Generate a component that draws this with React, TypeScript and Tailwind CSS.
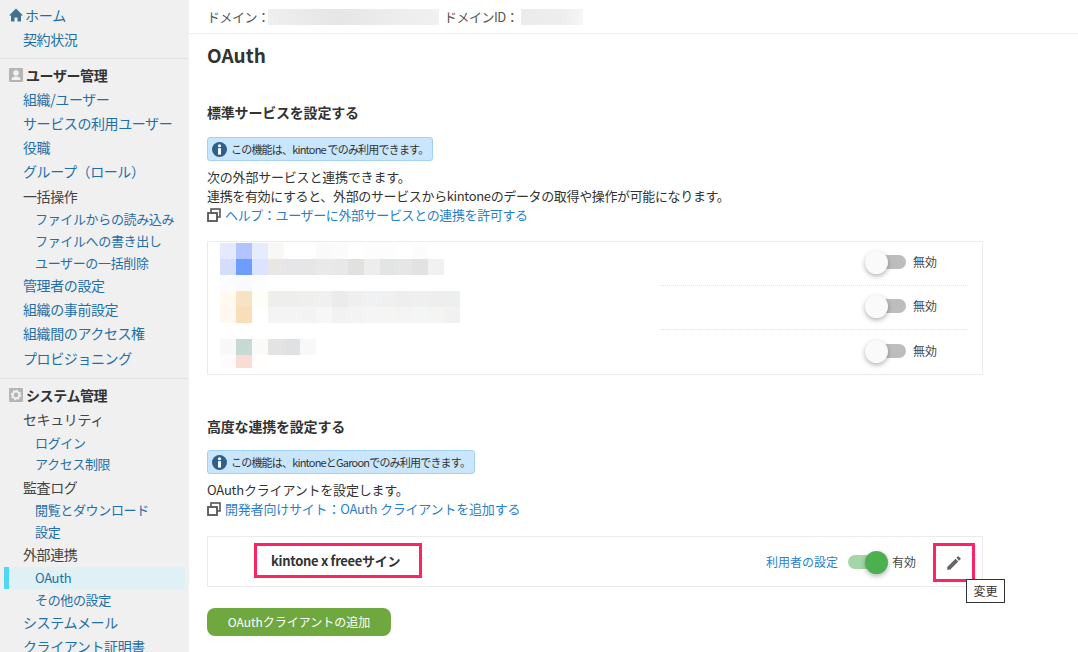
import React from "react";

const C = ({ c }: { c: string }) => <div className="w-4 h-full" style={{ backgroundColor: c }} />;

function Mosaic({ rows }: { rows: string[][] }) {
  return (
    <div className="flex flex-col h-[125px] overflow-hidden">
      {rows.map((r, i) => (
        <div key={i} className="flex h-4 shrink-0">
          {r.map((c, j) => (
            <C key={j} c={c} />
          ))}
        </div>
      ))}
    </div>
  );
}

const L1 = ({ children }: { children: React.ReactNode }) => (
  <a className="flex shrink-0 items-center h-[24.2px] pl-[23px] text-[14px] text-[#1f6fa8] tracking-[-0.4px] whitespace-nowrap">{children}</a>
);
const L1Plain = ({ children }: { children: React.ReactNode }) => (
  <div className="flex shrink-0 items-center h-[24.2px] pl-[23px] text-[14px] text-[#444444] tracking-[-0.4px] whitespace-nowrap">{children}</div>
);
const L2 = ({ children, active }: { children: React.ReactNode; active?: boolean }) => (
  <a
    className={
      "flex shrink-0 items-center h-[21.8px] text-[13px] text-[#1f6fa8] tracking-[-0.35px] whitespace-nowrap " +
      (active ? "ml-1 mr-1 pl-[26px] border-l-[5px] border-[#4fd8f5] bg-[#dff1f5]" : "pl-[35px]")
    }
  >
    {children}
  </a>
);
const Head = ({ icon, children }: { icon: React.ReactNode; children: React.ReactNode }) => (
  <div className="flex shrink-0 items-center h-[24px] pl-[9px] gap-[3px] text-[14px] font-bold text-[#333333] tracking-[-0.4px] whitespace-nowrap">
    {icon}
    <span>{children}</span>
  </div>
);

const Info = ({ children, w }: { children: React.ReactNode; w: string }) => (
  <div className={"flex items-center gap-[4px] h-6 pl-[4px] bg-[#c9e6fd] border border-[#a4d0f3] rounded-[3px] text-[11px] tracking-[-0.8px] text-[#333333] whitespace-nowrap " + w}>
    <svg width="15" height="15" viewBox="0 0 16 16" className="shrink-0">
      <circle cx="8" cy="8" r="8" fill="#2f5f8f" />
      <circle cx="8" cy="4" r="1.7" fill="#fff" />
      <rect x="6.4" y="6.6" width="3.2" height="6.8" fill="#fff" />
    </svg>
    <span>{children}</span>
  </div>
);

const ExtIcon = () => (
  <svg width="14" height="14" viewBox="0 0 14 14" className="shrink-0">
    <rect x="4" y="1" width="9" height="8" fill="none" stroke="#555555" strokeWidth="1.6" />
    <rect x="1" y="5" width="9" height="8" fill="#fff" stroke="#555555" strokeWidth="1.8" />
  </svg>
);

const ToggleOff = () => (
  <div className="flex items-center gap-[7px]">
    <div className="relative w-[37px] h-[14px] rounded-full bg-[#bdbdbd]">
      <div className="absolute left-[-4px] top-[-4px] w-[23px] h-[23px] rounded-full bg-[#fafafa] shadow-[0_2px_5px_rgba(0,0,0,0.3)]" />
    </div>
    <span className="text-[12px] text-[#444444]">無効</span>
  </div>
);

const ServiceRow = ({ last }: { last?: boolean }) => (
  <div className={"h-[44.3px] pb-[3px] flex items-center justify-end pr-[31px] " + (last ? "" : "border-b border-dotted border-[#e4e4e4]")}>
    <ToggleOff />
  </div>
);

export default function App() {
  return (
    <div
      className="flex w-[1078px] h-[652px] overflow-hidden bg-white text-[#333333]"
      style={{ fontFamily: '"Noto Sans CJK JP", "Noto Sans", sans-serif' }}
    >
      <aside className="w-[189px] shrink-0 bg-[#f0f0f0] flex flex-col overflow-hidden">
        <div className="pt-[3px] shrink-0">
          <div className="flex items-center h-[24px] pl-[9px] gap-[2px] text-[14px] text-[#1f6fa8] tracking-[-0.2px]">
            <svg width="14" height="14" viewBox="0 0 14 14">
              <path d="M7 0.5 L14 7.5 H12 V13.5 H8.5 V9.5 H5.5 V13.5 H2 V7.5 H0 Z" fill="#3f7391" />
            </svg>
            <span>ホーム</span>
          </div>
          <L1>契約状況</L1>
        </div>
        <div className="mt-[7px] mb-[4px] h-px shrink-0 bg-[#e2e2e2]" />
        <Head
          icon={
            <svg width="14" height="14" viewBox="0 0 14 14">
              <rect width="14" height="14" rx="1" fill="#b5b5b5" />
              <circle cx="7" cy="5" r="2.8" fill="#f2f2f2" />
              <path d="M2.5 12 C2.5 9 5 8.5 7 8.5 C9 8.5 11.5 9 11.5 12 Z" fill="#f2f2f2" />
            </svg>
          }
        >
          ユーザー管理
        </Head>
        <L1>組織/ユーザー</L1>
        <L1>サービスの利用ユーザー</L1>
        <L1>役職</L1>
        <L1>グループ（ロール）</L1>
        <L1Plain>一括操作</L1Plain>
        <L2>ファイルからの読み込み</L2>
        <L2>ファイルへの書き出し</L2>
        <L2>ユーザーの一括削除</L2>
        <L1>管理者の設定</L1>
        <L1>組織の事前設定</L1>
        <L1>組織間のアクセス権</L1>
        <L1>プロビジョニング</L1>
        <div className="mt-[8px] mb-[4px] h-px shrink-0 bg-[#e2e2e2]" />
        <Head
          icon={
            <svg width="14" height="14" viewBox="0 0 14 14">
              <rect width="14" height="14" rx="1" fill="#b5b5b5" />
              <circle cx="7" cy="7" r="3.4" fill="none" stroke="#f2f2f2" strokeWidth="2" />
              <circle cx="7" cy="7" r="4.6" fill="none" stroke="#f2f2f2" strokeWidth="1.4" strokeDasharray="1.6 2" />
            </svg>
          }
        >
          システム管理
        </Head>
        <L1Plain>セキュリティ</L1Plain>
        <L2>ログイン</L2>
        <L2>アクセス制限</L2>
        <L1Plain>監査ログ</L1Plain>
        <L2>閲覧とダウンロード</L2>
        <L2>設定</L2>
        <L1Plain>外部連携</L1Plain>
        <L2 active>OAuth</L2>
        <L2>その他の設定</L2>
        <L1>システムメール</L1>
        <L1>クライアント証明書</L1>
      </aside>

      <main className="flex-1 min-w-0 flex flex-col">
        <header className="h-[34px] shrink-0 pl-[18px] flex items-center border-b border-[#eeeeee] text-[13px] tracking-[-0.5px] text-[#555555]">
          <span>ドメイン：</span>
          <div className="w-[171px] h-4 bg-[linear-gradient(90deg,#efefef,#e5e6e5_40%,#ecedec_75%,#f1f1f1)] ml-[-1.5px]" />
          <span className="ml-[5px]">ドメインID：</span>
          <div className="w-[62px] h-4 bg-[linear-gradient(90deg,#ebebeb,#eeeeee_70%,#f6f6f6)] ml-[2.5px]" />
        </header>

        <div className="pl-[18px] pr-[95px] flex flex-col">
          <h1 className="mt-[7px] h-[27px] leading-[27px] text-[19px] font-bold text-[#333333]">OAuth</h1>

          <h2 className="mt-[34px] h-5 leading-5 text-[14px] font-bold tracking-[-0.2px] text-[#333333]">標準サービスを設定する</h2>
          <div className="mt-[15px]">
            <Info w="w-[226px]">この機能は、kintone でのみ利用できます。</Info>
          </div>
          <div className="mt-[6px] text-[13px] leading-[19px] text-[#333333] tracking-[-0.2px]">
            <p>次の外部サービスと連携できます。</p>
            <p className="tracking-[-0.36px]">連携を有効にすると、外部のサービスからkintoneのデータの取得や操作が可能になります。</p>
            <a className="flex items-center gap-[4px] text-[#2a7fc9] tracking-[-0.37px]">
              <ExtIcon />
              ヘルプ：ユーザーに外部サービスとの連携を許可する
            </a>
          </div>

          <section className="mt-[17px] w-[776px] h-[134px] border border-[#ebebeb] flex">
            <div className="w-[452px] pl-[12px] pt-[1px] flex flex-col shrink-0">
              <Mosaic
                rows={[
                  ["#e4e9fd", "#b0c4fd", "#e6ecfd", "#f8f8f6", "#ffffff", "#ffffff", "#fafafa", "#fbfbfb", "#ffffff", "#fcfdfc", "#fcfdfc", "#ffffff", "#fcfcfc"],
                  ["#d3defd", "#6d9dff", "#dce3fe", "#e8e7e5", "#e6e6e8", "#e6e6e6", "#e9e9e9", "#e8e8e8", "#e1e1e0", "#ededed", "#e3e5e4", "#e6e6e6", "#e2e2e2", "#f1f1f1"],
                  ["#fcfcff", "#f8faff", "#fcfdff"],
                  ["#fff9f0", "#f7e2c3", "#fffdf7", "#eeeeec", "#eeeeed", "#efefee", "#f0f0f0", "#ebebeb", "#efefef", "#f0f1f3", "#f0f0f1", "#eeeeee", "#efefef", "#eeeeee", "#edeeee"],
                  ["#fff8f0", "#f9dfb9", "#ffffff", "#f4f4f4", "#f4f4f4", "#f3f3f3", "#f7f7f7", "#f2f2f2", "#f3f3f3", "#f5f5f5", "#f5f5f4", "#f4f4f4", "#f4f6f5", "#f4f4f2", "#f1f1f1"],
                  [],
                  ["#f7f9f9", "#c8d9d4", "#fafaf8", "#e3e3e1", "#e0e1e2", "#f8f8f8"],
                  ["#fffbfc", "#f9ddd4", "#fffefc"],
                ]}
              />
            </div>
            <div className="flex-1 flex flex-col pr-[14px]">
              <ServiceRow />
              <ServiceRow />
              <ServiceRow last />
            </div>
          </section>

          <h2 className="mt-[41px] h-5 leading-5 text-[14px] font-bold tracking-[-0.2px] text-[#333333]">高度な連携を設定する</h2>
          <div className="mt-[14px]">
            <Info w="w-[268px]">この機能は、kintoneとGaroonでのみ利用できます。</Info>
          </div>
          <div className="mt-[6px] text-[13px] leading-[19px] text-[#333333] tracking-[-0.2px]">
            <p>OAuthクライアントを設定します。</p>
            <a className="flex items-center gap-[4px] text-[#2a7fc9]">
              <ExtIcon />
              開発者向けサイト：OAuth クライアントを追加する
            </a>
          </div>

          <section className="mt-[18px] w-[776px] h-[51px] border border-[#ebebeb] flex items-center">
            <div className="ml-[46px] mb-[2px] w-[168px] h-[35px] border-[3px] border-[#ff2366] flex items-center pl-[14px] text-[13px] font-bold tracking-[-0.3px] text-[#333333] whitespace-nowrap">
              kintone x freeeサイン
            </div>
            <a className="ml-auto text-[12px] text-[#2a7fc9] whitespace-nowrap">利用者の設定</a>
            <div className="ml-[10px] relative w-[36px] h-[14px] rounded-full bg-[#a5d6a7]">
              <div className="absolute right-[-4px] top-[-4px] w-[23px] h-[23px] rounded-full bg-[#4caf50] shadow-[0_2px_5px_rgba(0,0,0,0.3)]" />
            </div>
            <span className="ml-[8px] text-[12px] text-[#444444] whitespace-nowrap">有効</span>
            <div className="relative ml-[17px] mr-[7px] w-[42px] h-[39px] mt-[2px] border-[3px] border-[#ff2366] flex items-center justify-center">
              <svg width="18" height="18" viewBox="0 0 24 24">
                <path
                  d="M3 17.25V21h3.75L17.81 9.94l-3.75-3.75L3 17.25zM20.71 7.04a1 1 0 0 0 0-1.41l-2.34-2.34a1 1 0 0 0-1.41 0l-1.83 1.83 3.75 3.75 1.83-1.83z"
                  fill="#666666"
                />
              </svg>
              <div className="absolute left-[30px] top-[33px] w-[39px] h-[24px] bg-white border border-[#333333] flex items-center justify-center text-[12px] text-[#333333] whitespace-nowrap">
                変更
              </div>
            </div>
          </section>

          <button className="mt-[21px] w-[184px] h-[28px] rounded-[8px] bg-[#6fa83f] text-white text-[12px]">
            OAuthクライアントの追加
          </button>
        </div>
      </main>
    </div>
  );
}
